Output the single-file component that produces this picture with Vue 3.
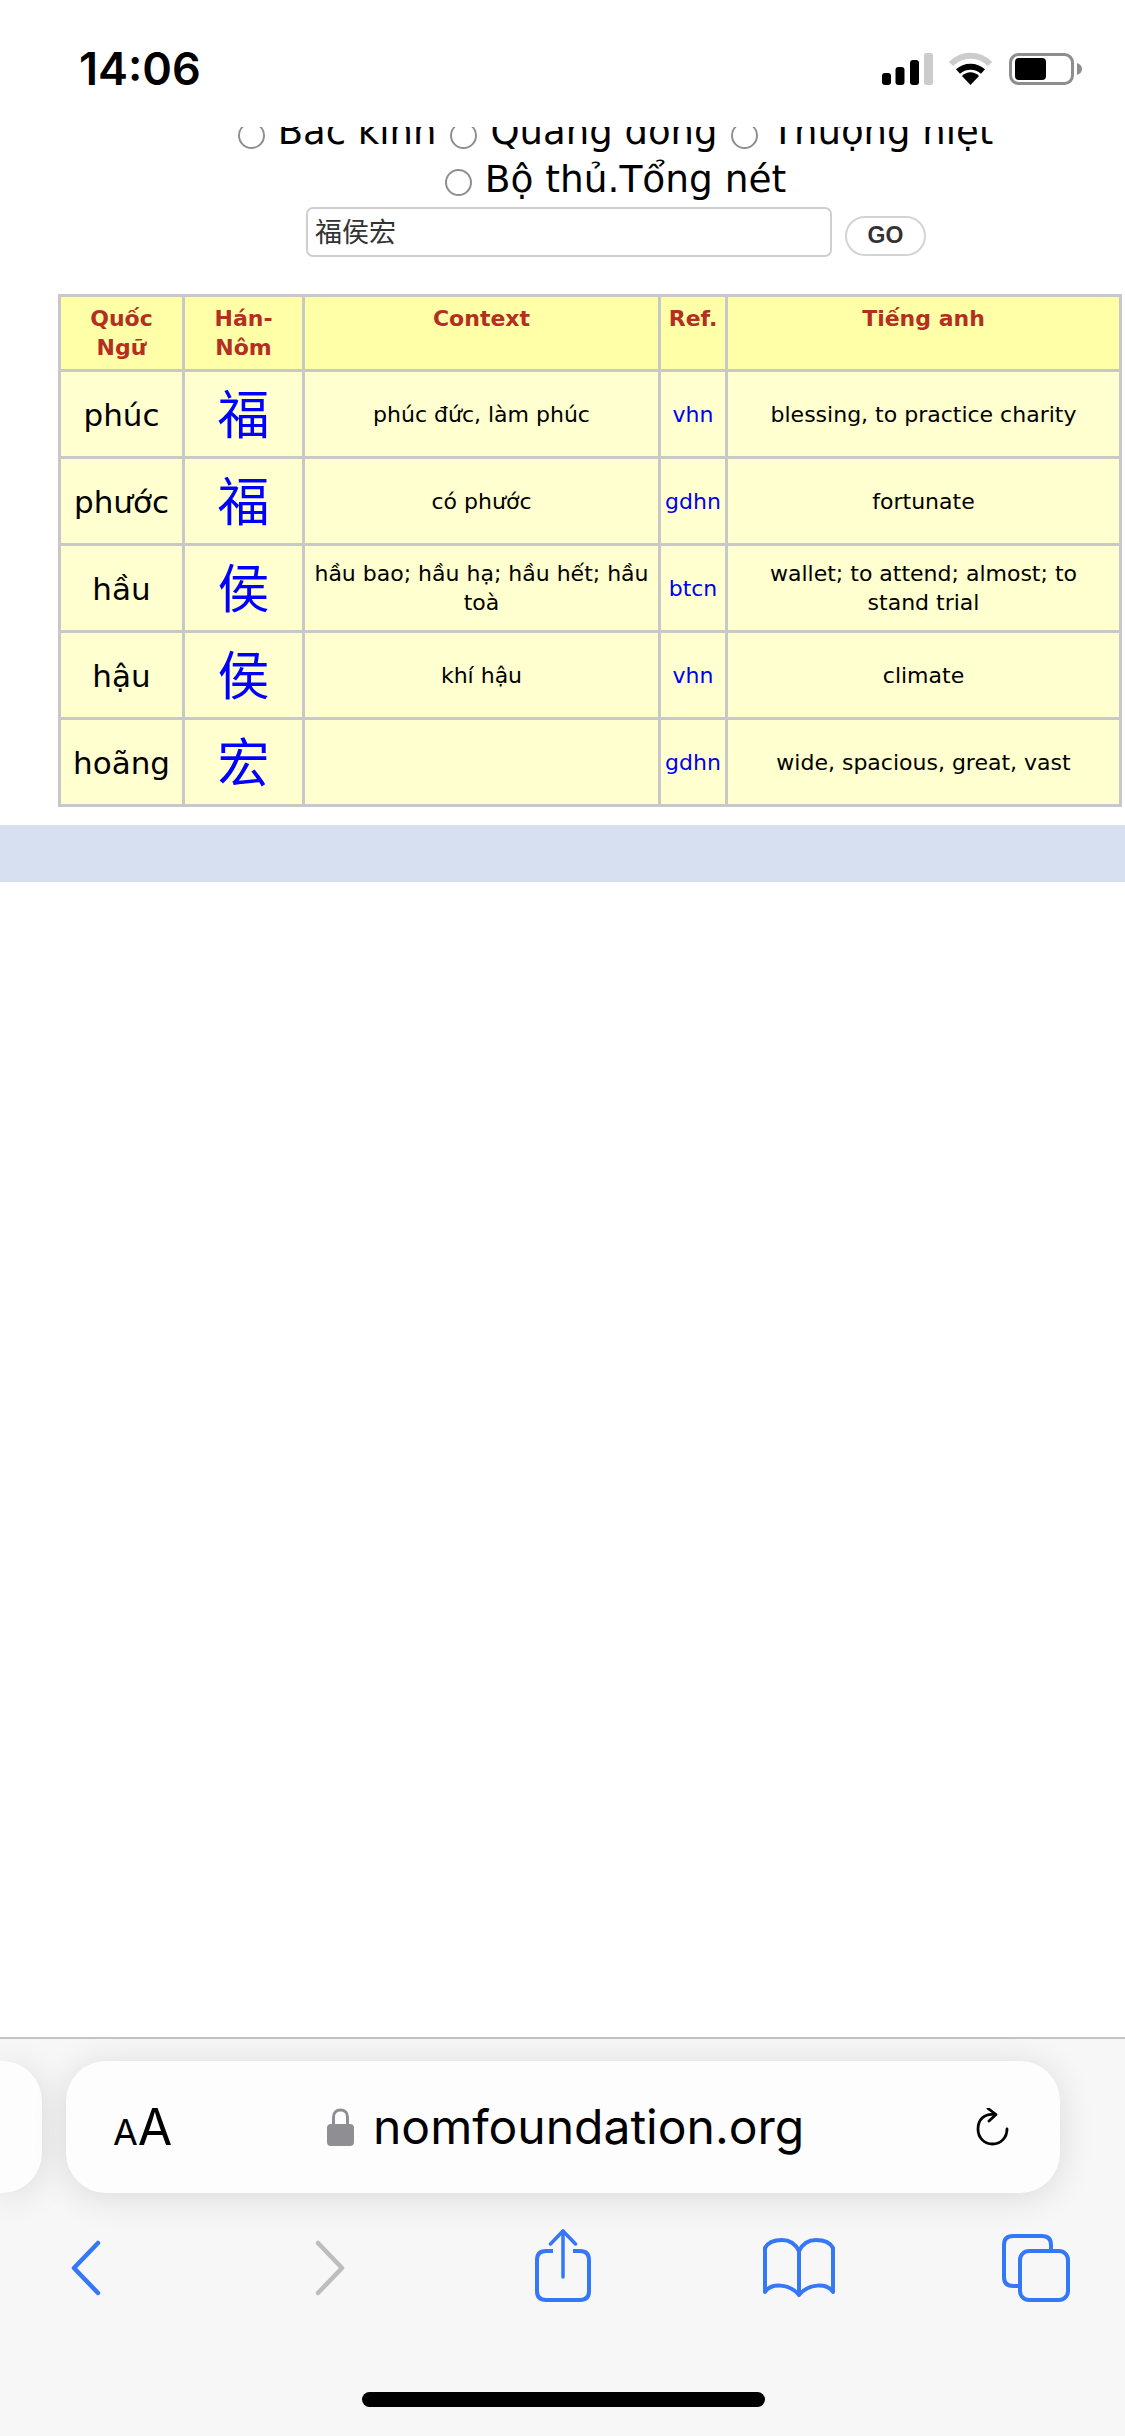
<script setup>
const radios = ['Bắc kinh', 'Quảng đông', 'Thượng hiệt']
const rows = [
  { q: 'phúc', h: '福', c: 'phúc đức, làm phúc', r: 'vhn', e: 'blessing, to practice charity' },
  { q: 'phước', h: '福', c: 'có phước', r: 'gdhn', e: 'fortunate' },
  { q: 'hầu', h: '侯', c: 'hầu bao; hầu hạ; hầu hết; hầu toà', r: 'btcn', e: 'wallet; to attend; almost; to stand trial' },
  { q: 'hậu', h: '侯', c: 'khí hậu', r: 'vhn', e: 'climate' },
  { q: 'hoãng', h: '宏', c: '', r: 'gdhn', e: 'wide, spacious, great, vast' }
]
</script>

<template>
  <div class="screen">
    <header class="status">
      <span class="time">14:06</span>
      <div class="status-icons">
        <svg class="signal" width="51" height="32" viewBox="0 0 51 32">
          <rect x="0" y="20" width="9" height="12" rx="3" fill="#000" />
          <rect x="13.5" y="14" width="9" height="18" rx="3" fill="#000" />
          <rect x="28" y="7" width="9" height="25" rx="3" fill="#000" />
          <rect x="42" y="0" width="9" height="32" rx="2" fill="#ccc" />
        </svg>
        <svg class="wifi" width="45" height="33" viewBox="0 0 45 33">
          <path d="M3 12 C14 1 31 1 42 12" fill="none" stroke="#ccc" stroke-width="6" />
          <path d="M10 19.5 C17 13 28 13 35 19.5" fill="none" stroke="#000" stroke-width="6" />
          <path d="M14 24 C19 19 26 19 31 24 L22.5 33 Z" fill="#000" />
        </svg>
        <svg class="battery" width="73" height="32" viewBox="0 0 73 32">
          <rect x="1.5" y="1.5" width="62" height="29" rx="8" fill="none" stroke="#8e8e8e" stroke-width="3" />
          <rect x="6" y="5" width="31" height="22" rx="4" fill="#000" />
          <path d="M68 10 C71 11 73 13 73 16 C73 19 71 21 68 22 Z" fill="#8e8e8e" />
        </svg>
      </div>
    </header>

    <main class="page">
      <div class="radio-line clipped">
        <template v-for="r in radios" :key="r">
          <span class="radio"></span><span class="radio-label">{{ r }}</span>
        </template>
      </div>
      <div class="radio-line">
        <span class="radio"></span><span class="radio-label">Bộ thủ.Tổng nét</span>
      </div>
      <div class="search">
        <div class="input">福侯宏</div>
        <button class="go">GO</button>
      </div>

      <table class="dict">
        <colgroup>
          <col class="c1" /><col class="c2" /><col class="c3" /><col class="c4" /><col class="c5" />
        </colgroup>
        <thead>
          <tr>
            <th>Quốc Ngữ</th>
            <th>Hán-Nôm</th>
            <th>Context</th>
            <th>Ref.</th>
            <th>Tiếng anh</th>
          </tr>
        </thead>
        <tbody>
          <tr v-for="(row, i) in rows" :key="i">
            <td class="word">{{ row.q }}</td>
            <td class="han">{{ row.h }}</td>
            <td>{{ row.c }}</td>
            <td class="ref">{{ row.r }}</td>
            <td class="english">{{ row.e }}</td>
          </tr>
        </tbody>
      </table>

      <div class="band"></div>
    </main>

    <footer class="toolbar">
      <div class="address-row">
        <div class="stub"></div>
        <div class="pill">
          <span class="aa"><span class="aa-small">A</span><span class="aa-big">A</span></span>
          <div class="url">
            <svg width="27" height="38" viewBox="0 0 27 38">
              <path d="M6.5 18 V9 C6.5 4.500 9.500 2 13.500 2 C17.500 2 20.500 4.500 20.500 9 V18" fill="none" stroke="#8e8e93" stroke-width="3" />
              <rect x="0" y="16" width="27" height="22" rx="4" fill="#8e8e93" />
            </svg>
            <span class="url-text">nomfoundation.org</span>
          </div>
          <svg class="reload" width="33" height="38" viewBox="0 0 33 38">
            <path d="M19 6.500 C8 5 2 12 2 21 C2 30 8.500 36 16.500 36 C24.500 36 31 30 31 21" fill="none" stroke="#000" stroke-width="2.800" stroke-linecap="round" />
            <path d="M12 0.500 L20 6.500 L13 13" fill="none" stroke="#000" stroke-width="2.800" stroke-linecap="round" stroke-linejoin="round" />
          </svg>
        </div>
      </div>

      <nav class="nav">
        <svg class="i-back" width="32" height="56" viewBox="0 0 32 56">
          <path d="M28 3 L4 28 L28 53" fill="none" stroke="#3478f6" stroke-width="4.500" stroke-linecap="round" stroke-linejoin="round" />
        </svg>
        <svg class="i-fwd" width="32" height="56" viewBox="0 0 32 56">
          <path d="M4 3 L28 28 L4 53" fill="none" stroke="#bdbdbd" stroke-width="4.500" stroke-linecap="round" stroke-linejoin="round" />
        </svg>
        <svg class="i-share" width="56" height="74" viewBox="0 0 56 74">
          <path d="M18 22 H11 C5 22 2 25 2 31 V62 C2 68 5 71 11 71 H45 C51 71 54 68 54 62 V31 C54 25 51 22 45 22 H38" fill="none" stroke="#3478f6" stroke-width="4" />
          <path d="M28 48 V2" fill="none" stroke="#3478f6" stroke-width="3.500" stroke-linecap="round" />
          <path d="M15.500 15 L28 2 L40.500 15" fill="none" stroke="#3478f6" stroke-width="3.500" stroke-linecap="round" stroke-linejoin="round" />
        </svg>
        <svg class="i-book" width="72" height="60" viewBox="0 0 72 60">
          <path d="M36 13 C32 5 25 2 19 2 C12 2 5 4 2 10 V54 C8 45 26 45 36 57 C46 45 64 45 70 54 V10 C67 4 60 2 53 2 C47 2 40 5 36 13 V57" fill="none" stroke="#3478f6" stroke-width="4" stroke-linejoin="round" />
        </svg>
        <svg class="i-tabs" width="68" height="68" viewBox="0 0 68 68">
          <path d="M17 52 H11 C5 52 2 49 2 43 V11 C2 5 5 2 11 2 H40 C46 2 49 5 49 11 V16" fill="none" stroke="#3478f6" stroke-width="4" />
          <rect x="18" y="17" width="48" height="49" rx="9" fill="none" stroke="#3478f6" stroke-width="4" />
        </svg>
      </nav>

      <div class="home"></div>
    </footer>
  </div>
</template>

<style>
html,
body {
  margin: 0;
  background: #fff;
}
</style>

<style scoped>
.screen {
  width: 1125px;
  height: 2436px;
  display: flex;
  flex-direction: column;
  overflow: hidden;
  background: #fff;
  font-family: "DejaVu Sans", sans-serif;
  color: #000;
}

/* status bar */
.status {
  height: 127px;
  flex: none;
  display: flex;
  justify-content: space-between;
  align-items: flex-start;
  padding: 45px 43px 0 79px;
  box-sizing: border-box;
}
.time {
  font-family: Inter, sans-serif;
  font-weight: 600;
  font-size: 45px;
  line-height: 48px;
}
.status-icons {
  display: flex;
  align-items: flex-start;
  padding-top: 8px;
}
.wifi {
  margin-left: 15px;
  margin-top: -1px;
}
.battery {
  margin-left: 16px;
}

/* page */
.page {
  flex: 1;
  min-height: 0;
  overflow: hidden;
}
.radio-line {
  display: flex;
  justify-content: center;
  align-items: center;
  height: 47px;
  padding-left: 92px;
  font-size: 37.500px;
  line-height: 47px;
  white-space: nowrap;
}
.radio-line .radio {
  margin-top: 5px;
}
.radio-line.clipped {
  height: 29px;
  align-items: flex-end;
  overflow: hidden;
  font-size: 37px;
}
.radio-line.clipped .radio-label {
  margin-bottom: 1px;
}
.radio-line.clipped .radio {
  margin-top: 0;
  margin-bottom: 7px;
}
.radio {
  width: 27px;
  height: 27px;
  border: 2.500px solid #8e8e8e;
  border-radius: 50%;
  box-sizing: border-box;
  margin: 0 13px 0 14px;
  flex: none;
}
.radio-label {
  display: block;
}
.search {
  display: flex;
  align-items: flex-end;
  margin-top: 4px;
  padding-left: 306px;
}
.input {
  width: 526px;
  height: 50px;
  box-sizing: border-box;
  border: 2px solid #cfcfcf;
  border-radius: 7px;
  padding-left: 7px;
  font-family: "Noto Sans CJK SC", sans-serif;
  font-size: 27px;
  line-height: 44px;
  color: #333;
}
.go {
  width: 81px;
  height: 40px;
  margin: 0 0 1px 13px;
  border: 2px solid #d4d4d4;
  border-radius: 20px;
  background: #fff;
  padding: 0 0 2px;
  font-family: "Liberation Sans", sans-serif;
  font-weight: 700;
  font-size: 23px;
  color: #333;
}

/* table */
.dict {
  margin: 37px 0 0 58px;
  width: 1061px;
  table-layout: fixed;
  border-collapse: collapse;
  font-size: 22px;
  line-height: 28.600px;
}
.c1 { width: 124px; }
.c2 { width: 120px; }
.c3 { width: 356px; }
.c4 { width: 67px; }
.c5 { width: 394px; }
.dict th,
.dict td {
  border: 3px solid #c8c8c8;
  padding: 0 5px;
  text-align: center;
}
.dict th {
  height: 75px;
  padding-top: 8px;
  vertical-align: top;
  box-sizing: border-box;
  background: #ffffa8;
  color: #b22f22;
  font-weight: 700;
}
.dict td {
  height: 82px;
  padding-top: 2px;
  box-sizing: content-box;
  background: #ffffd0;
  vertical-align: middle;
}
.dict .english {
  padding: 2px 12px 0;
}
.dict .word {
  font-size: 31px;
  padding: 2px 0 0;
}
.dict .han {
  height: 80px;
  padding-top: 0;
  padding-bottom: 4px;
  font-family: "Noto Sans CJK SC", sans-serif;
  font-size: 52px;
  color: #0000ff;
  line-height: 60px;
}
.dict .ref {
  color: #0000ee;
  padding: 2px 0 0;
}
.band {
  height: 57px;
  margin-top: 18px;
  background: #d6e0f0;
}

/* toolbar */
.toolbar {
  height: 399px;
  flex: none;
  box-sizing: border-box;
  border-top: 2px solid #c4c4c4;
  background: #f7f7f7;
}
.address-row {
  display: flex;
  margin-top: 22px;
  height: 132px;
}
.stub {
  width: 42px;
  border-radius: 0 40px 40px 0;
  background: #fdfdfd;
  box-shadow: 0 4px 36px rgba(0, 0, 0, 0.12);
}
.pill {
  width: 994px;
  margin-left: 24px;
  box-sizing: border-box;
  border-radius: 40px;
  background: #fdfdfd;
  box-shadow: 0 4px 36px rgba(0, 0, 0, 0.12);
  display: flex;
  align-items: center;
  padding: 0 51px 0 47px;
}
.aa {
  display: flex;
  align-items: baseline;
  width: 214px;
  font-family: Inter, sans-serif;
  line-height: 1;
}
.aa-small {
  font-size: 36px;
}
.aa-big {
  font-size: 50px;
}
.url {
  display: flex;
  align-items: center;
  flex: 1;
}
.url-text {
  margin-left: 19px;
  font-family: Inter, sans-serif;
  font-size: 48px;
  line-height: 60px;
}
.nav {
  display: flex;
  align-items: flex-start;
  padding-left: 69.500px;
  margin-top: 36px;
  height: 78px;
}
.i-back { margin-top: 11px; }
.i-fwd { margin: 11px 0 0 212px; }
.i-share { margin-left: 189px; }
.i-book { margin: 9px 0 0 172px; }
.i-tabs { margin: 5px 0 0 167px; }
.home {
  width: 403px;
  height: 15px;
  margin: 85px 0 0 362px;
  border-radius: 8px;
  background: #000;
}
</style>
